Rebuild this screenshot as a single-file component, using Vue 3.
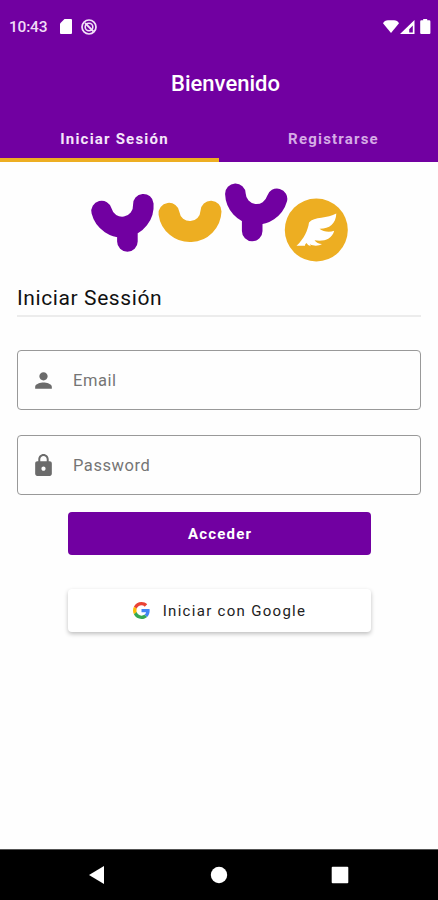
<script setup>
import { ref } from 'vue';

const activeTab = ref(0);
const tabs = ['Iniciar Sesión', 'Registrarse'];

const email = ref('');
const password = ref('');
</script>

<template>
    <div class="screen">
        <header class="top">
            <div class="status-bar">
                <span class="clock">10:43</span>
                <svg class="sd" viewBox="0 0 12 15"><path d="M4.5 0H11a1 1 0 0 1 1 1v13a1 1 0 0 1-1 1H1a1 1 0 0 1-1-1V4.5z" fill="#fff" /></svg>
                <svg class="sync" viewBox="0 0 16 16" fill="none" stroke="#f3e2f8">
                    <circle cx="8" cy="8" r="7" stroke-width="1.7" />
                    <circle cx="8" cy="8" r="3.8" stroke-width="1.6" />
                    <path d="M4 4l8.500 8.500" stroke-width="1.8" />
                </svg>
                <svg class="signals" viewBox="0 0 48 16" fill="#fff">
                    <path d="M0 4.200Q1.500 1.200 5 1.200H11Q14.500 1.200 16 4.200L8 14z" />
                    <path fill-rule="evenodd" d="M31.5 1v14H17zM29.8 6.5l-3.6 3.7v3.3h3.6z" />
                    <path d="M40.2 0h4v1.200h2a1.200 1.200 0 0 1 1.200 1.200V14a1 1 0 0 1-1 1h-8.200a1 1 0 0 1-1-1V2.400a1.200 1.200 0 0 1 1.200-1.200h1.800z" />
                </svg>
            </div>
            <h1 class="title">Bienvenido</h1>
            <nav class="tabs">
                <button
                v-for="(tab, index) in tabs"
                :key="index"
                class="tab"
                :class="{ 'active' : activeTab === index }"
                @click="activeTab = index"
                >{{ tab }}</button>
            </nav>
        </header>

        <main class="content">
            <svg class="logo" viewBox="88 180 262 85" fill="none" stroke-linecap="round" stroke-linejoin="round">
                <g stroke="#7100a1" stroke-width="20.6">
                    <path d="M101.6 211A21.2 21.2 0 0 0 143.3 204.2M127.4 228.500V241.500" />
                    <path d="M235.4 193.8A21.2 21.2 0 0 0 277 198.8M252.2 218V231" />
                </g>
                <path d="M169 213.3A21.1 21.1 0 0 0 211 211.2" stroke="#edae22" stroke-width="21" />
                <circle cx="316.3" cy="230" r="31.5" fill="#edae22" />
                <path
                    fill="#fff"
                    d="M336.300 213.500C328 218.500 314 216.500 309 222.500C308 230 304 239 296.500 245.800H305Q304.800 244 306.500 243Q307.500 245.500 311 246.300Q310 245.300 310 244.300C314 246.500 319 246 322 244C319 244 316 242.500 314.500 240.300C323 242 332 239.500 334.200 230.800C330 232.500 323 232 319.500 228.800C329 229 336 224 336.300 213.500Z"
                />
            </svg>

            <h2 class="heading">Iniciar Sessión</h2>

            <label class="field">
                <svg viewBox="0 0 24 24"><path d="M12 12c2.210 0 4-1.790 4-4s-1.790-4-4-4-4 1.790-4 4 1.790 4 4 4zm0 2c-2.670 0-8 1.340-8 4v2h16v-2c0-2.660-5.330-4-8-4z" /></svg>
                <input v-model="email" type="text" placeholder="Email">
            </label>
            <label class="field">
                <svg viewBox="0 0 24 24"><path d="M18 8h-1V6c0-2.760-2.240-5-5-5S7 3.240 7 6v2H6c-1.100 0-2 .9-2 2v10c0 1.100.9 2 2 2h12c1.100 0 2-.9 2-2V10c0-1.100-.9-2-2-2zm-6 9c-1.100 0-2-.9-2-2s.9-2 2-2 2 .9 2 2-.9 2-2 2zm3.100-9H8.900V6c0-1.710 1.390-3.100 3.100-3.100s3.100 1.390 3.100 3.100v2z" /></svg>
                <input v-model="password" type="password" placeholder="Password">
            </label>

            <button class="btn primary">Acceder</button>
            <button class="btn google">
                <svg viewBox="0 0 48 48">
                    <path fill="#EA4335" d="M24 9.500c3.540 0 6.710 1.220 9.210 3.600l6.850-6.850C35.900 2.380 30.470 0 24 0 14.620 0 6.510 5.380 2.560 13.220l7.980 6.190C12.430 13.720 17.740 9.500 24 9.500z" />
                    <path fill="#4285F4" d="M46.980 24.550c0-1.570-.15-3.090-.38-4.550H24v9.020h12.940c-.58 2.960-2.260 5.480-4.780 7.180l7.730 6c4.510-4.180 7.090-10.360 7.090-17.650z" />
                    <path fill="#FBBC05" d="M10.530 28.590c-.48-1.450-.76-2.990-.76-4.590s.27-3.140.76-4.590l-7.980-6.190C.92 16.460 0 20.120 0 24s.92 7.540 2.560 10.780l7.970-6.190z" />
                    <path fill="#34A853" d="M24 48c6.480 0 11.930-2.130 15.890-5.810l-7.730-6c-2.150 1.450-4.920 2.300-8.160 2.300-6.260 0-11.570-4.220-13.470-9.910l-7.980 6.190C6.510 42.620 14.620 48 24 48z" />
                </svg>
                <span>Iniciar con Google</span>
            </button>
        </main>

        <footer class="nav-bar">
            <svg viewBox="0 0 18 20"><path d="M1 10L16 1v18z" /></svg>
            <svg viewBox="0 0 18 20"><circle cx="9" cy="10" r="8.200" /></svg>
            <svg viewBox="0 0 18 20"><rect x=".7" y="1.700" width="16.600" height="16.600" rx="1" /></svg>
        </footer>
    </div>
</template>

<style>
body {
    background-color: #fff;
}
</style>

<style scoped>
.screen {
    display: flex;
    flex-direction: column;
    height: 900px;
    font-family: Roboto, sans-serif;
    background-color: #fefefe;
    overflow: hidden;
}

button {
    font-family: inherit;
    border: none;
    cursor: pointer;
}

.top {
    display: flex;
    flex-direction: column;
    height: 162px;
    flex-shrink: 0;
    background-color: #7100a1;
    color: #fff;
}

.status-bar {
    display: flex;
    align-items: center;
    height: 53px;
    box-sizing: border-box;
    padding: 0 7px 0 9px;
}

.clock {
    width: 51px;
    font-size: 15.5px;
    font-weight: 500;
    letter-spacing: -0.2px;
    color: #f0dcf7;
}

.sd {
    width: 12px;
    height: 15px;
}

.sync {
    width: 16px;
    height: 16px;
    margin-left: 9px;
}

.signals {
    width: 48px;
    height: 16px;
    margin-left: auto;
}

.title {
    margin: 0;
    height: 61px;
    line-height: 62px;
    text-align: center;
    font-size: 22px;
    font-weight: 500;
    padding-left: 13px;
}

.tabs {
    display: flex;
    flex: 1;
}

.tab {
    flex: 1;
    padding: 5px 0 0 10px;
    background: none;
    color: #d5abe6;
    font-size: 15px;
    font-weight: 700;
    letter-spacing: 1.2px;
    border-bottom: 4px solid transparent;
}

.tab.active {
    color: #f5e6fa;
    border-bottom-color: #edae22;
}

.content {
    display: flex;
    flex-direction: column;
    flex: 1;
    padding: 18px 17px 0;
}

.logo {
    width: 262px;
    height: 85px;
    margin-left: 71px;
}

.heading {
    margin: 17px 0 33px;
    height: 33px;
    line-height: 32px;
    border-bottom: 2px solid #ececec;
    font-size: 21px;
    font-weight: 400;
    letter-spacing: 0.6px;
    color: #111;
}

.field {
    display: flex;
    align-items: center;
    height: 60px;
    box-sizing: border-box;
    margin-bottom: 25px;
    padding-left: 13px;
    border: 1px solid #999;
    border-radius: 4px;
}

.field svg {
    width: 25px;
    height: 25px;
    fill: #6b6b6b;
}

.field input {
    flex: 1;
    margin-left: 17px;
    padding: 0;
    border: none;
    outline: none;
    background: none;
    font-family: inherit;
    font-size: 16.5px;
    letter-spacing: 0.55px;
}

.field input::placeholder {
    color: #757575;
}

.btn {
    display: flex;
    align-items: center;
    justify-content: center;
    align-self: center;
    width: 303px;
    height: 43px;
    padding: 0;
    border-radius: 4px;
    font-size: 15px;
    letter-spacing: 1.3px;
}

.primary {
    margin-top: -8px;
    padding-left: 2px;
    box-sizing: border-box;
    background-color: #7100a1;
    color: #fff;
    font-weight: 700;
    letter-spacing: 1.2px;
}

.google {
    margin-top: 34px;
    padding-left: 1px;
    box-sizing: border-box;
    background-color: #fff;
    color: #222;
    font-weight: 400;
    box-shadow: 0 2px 4px rgba(0, 0, 0, 0.25);
}

.google svg {
    width: 17px;
    height: 17px;
    margin-right: 13px;
}

.nav-bar {
    display: flex;
    align-items: center;
    justify-content: space-between;
    height: 51px;
    box-sizing: border-box;
    flex-shrink: 0;
    padding: 0 89px 0 88px;
    border-top: 1px solid #555;
    background-color: #000;
}

.nav-bar svg {
    width: 18px;
    height: 20px;
    fill: #fff;
}
</style>
